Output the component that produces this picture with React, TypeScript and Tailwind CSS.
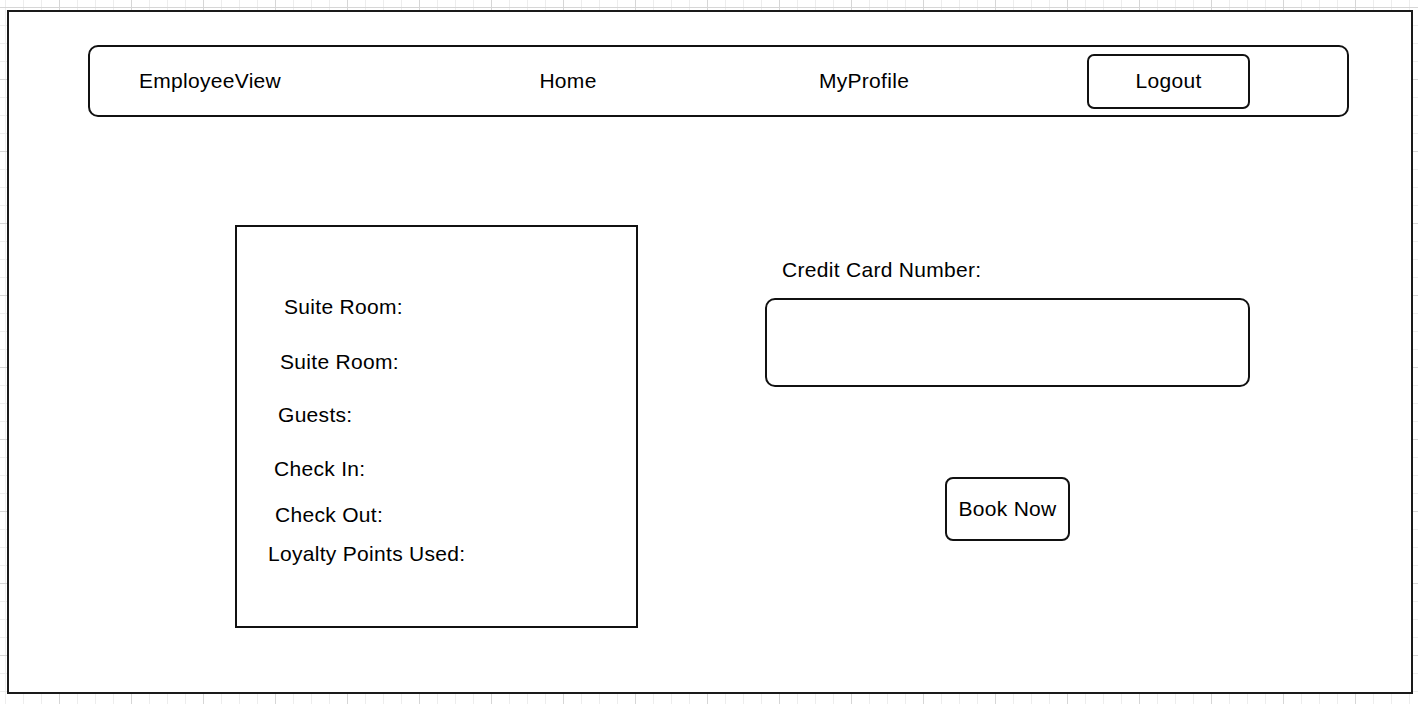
import React from "react";

const font = { fontFamily: '"Liberation Sans", Arial, Helvetica, sans-serif' };

export default function App() {
  return (
    <div
      className="h-[704px] w-full overflow-hidden bg-white pl-[7px] pt-[10px] text-[21px] leading-6 tracking-[0.3px] text-black bg-[linear-gradient(to_right,#d6d6d6_1px,transparent_1px),linear-gradient(to_bottom,#d6d6d6_1px,transparent_1px),linear-gradient(to_right,#ededed_1px,transparent_1px),linear-gradient(to_bottom,#ededed_1px,transparent_1px)] bg-size-[72px_72px,72px_72px,18px_18px,18px_18px] bg-position-[59px_7px]"
      style={font}
    >
      <div className="flex h-[684px] w-[1406px] flex-col border-2 border-[#1a1a1a] bg-white">
        {/* Navbar */}
        <div className="ml-[79px] mt-[33px] flex h-[72px] w-[1261px] items-center rounded-[10px] border-2 border-[#111]">
          <div className="ml-[20px] w-[200px] text-center">EmployeeView</div>
          <div className="ml-[158px] w-[200px] text-center">Home</div>
          <div className="ml-[96px] w-[200px] text-center">MyProfile</div>
          <div className="ml-[123px] flex h-[55px] w-[163px] items-center justify-center rounded-[7px] border-2 border-[#111]">
            Logout
          </div>
        </div>

        {/* Body */}
        <div className="mt-[108px] flex">
          <div className="ml-[226px] flex h-[403px] w-[403px] flex-col items-start border-2 border-[#111]">
            <div className="ml-[47px] mt-[68px]">Suite Room:</div>
            <div className="ml-[43px] mt-[31px]">Suite Room:</div>
            <div className="ml-[41px] mt-[29px]">Guests:</div>
            <div className="ml-[37px] mt-[30px]">Check In:</div>
            <div className="ml-[38px] mt-[22px]">Check Out:</div>
            <div className="ml-[31px] mt-[15px]">Loyalty Points Used:</div>
          </div>

          <div className="ml-[127px] mt-[33px] flex flex-col items-start">
            <div className="ml-[17px]">Credit Card Number:</div>
            <div className="mt-[16px] h-[89px] w-[485px] rounded-[10px] border-2 border-[#111]" />
            <div className="ml-[180px] mt-[90px] flex h-[64px] w-[125px] items-center justify-center rounded-[8px] border-2 border-[#111]">
              Book Now
            </div>
          </div>
        </div>
      </div>
    </div>
  );
}
